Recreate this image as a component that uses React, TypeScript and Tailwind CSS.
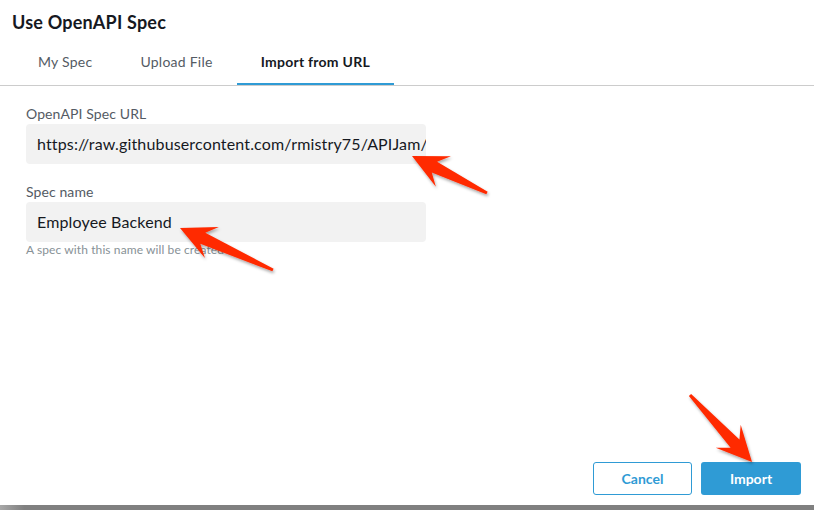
import React from "react";

type Pt = [number, number];

// skitch-style arrow, tail -> tip
function arrowPoints(tail: Pt, tip: Pt) {
  const [tx, ty] = tail;
  const [px, py] = tip;
  const len = Math.hypot(px - tx, py - ty);
  const ux = (px - tx) / len;
  const uy = (py - ty) / len;
  const nx = -uy;
  const ny = ux;
  const at = (back: number, side: number): string =>
    `${px - ux * back + nx * side},${py - uy * back + ny * side}`;
  const tailHalf = 1.5;
  const pts = [
    `${tx + nx * tailHalf},${ty + ny * tailHalf}`,
    at(25, 6),
    at(35, 17),
    `${px},${py}`,
    at(35, -17),
    at(25, -6),
    `${tx - nx * tailHalf},${ty - ny * tailHalf}`,
  ];
  return pts.join(" ");
}

const arrows: { tail: Pt; tip: Pt }[] = [
  { tail: [487, 193], tip: [412, 156] },
  { tail: [273, 270], tip: [180, 228] },
  { tail: [690, 395], tip: [752, 462] },
];

const tabs = ["My Spec", "Upload File", "Import from URL"];

function Field({ label, value }: { label: string; value: string }) {
  return (
    <div className="flex flex-col">
      <label className="text-[14px] leading-[20px] tracking-[0.1px] text-[#545b64]">{label}</label>
      <div className="w-[400px] h-[40px] rounded-[4px] bg-[#f2f2f2] pl-[11px] pr-[4px] overflow-hidden whitespace-nowrap text-[16px] leading-[40px] tracking-[0.15px] text-[#16191f]">
        {value}
      </div>
    </div>
  );
}

export default function App() {
  return (
    <div
      className="relative w-[814px] h-[510px] bg-white flex flex-col overflow-hidden"
      style={{ fontFamily: "Lato, 'Open Sans', sans-serif" }}
    >
      <h1 className="pl-[12px] pt-[11px] text-[18px] leading-[22px] font-bold tracking-[0.2px] text-[#16191f]">
        Use OpenAPI Spec
      </h1>

      <div className="flex pl-[14px] mt-[7px] border-b border-[#cccccc]">
        {tabs.map((t, i) => (
          <div
            key={t}
            className={
              i === 2
                ? "px-[24px] pt-[12px] pb-[11px] text-[14px] leading-[20px] font-bold tracking-[0.25px] text-[#16191f] border-b-2 border-[#2f9bd5]"
                : "px-[24px] pt-[12px] pb-[11px] text-[14px] leading-[20px] tracking-[0.25px] text-[#545b64] border-b-2 border-transparent"
            }
          >
            {t}
          </div>
        ))}
      </div>

      <div className="flex-1 flex flex-col pl-[26px] pt-[18px]">
        <Field
          label="OpenAPI Spec URL"
          value="https://raw.githubusercontent.com/rmistry75/APIJam/"
        />
        <div className="mt-[18px]">
          <Field label="Spec name" value="Employee Backend" />
        </div>
        <p className="text-[12px] leading-[16px] tracking-[0.1px] text-[#879196]">
          A spec with this name will be created
        </p>

        <div className="mt-auto flex justify-end gap-[9px] pr-[13px] pb-[10px]">
          <button className="w-[99px] h-[33px] rounded-[3px] border border-[#2f9bd5] bg-white text-[14px] font-bold text-[#2f9bd5]">
            Cancel
          </button>
          <button className="w-[100px] h-[33px] rounded-[3px] bg-[#2f9bd5] text-[14px] font-bold text-white">
            Import
          </button>
        </div>
      </div>

      <div className="h-[5px] bg-gradient-to-r from-[#a8a8a8] via-[#808080] via-[3%] to-[#808080]" />

      <svg className="absolute inset-0 pointer-events-none" width="814" height="510">
        <defs>
          <filter id="shadow" x="-20%" y="-20%" width="140%" height="140%">
            <feDropShadow dx="1" dy="2" stdDeviation="1.5" floodColor="#000" floodOpacity="0.35" />
          </filter>
        </defs>
        {arrows.map((a, i) => (
          <polygon key={i} points={arrowPoints(a.tail, a.tip)} fill="#ff2a00" filter="url(#shadow)" />
        ))}
      </svg>
    </div>
  );
}
